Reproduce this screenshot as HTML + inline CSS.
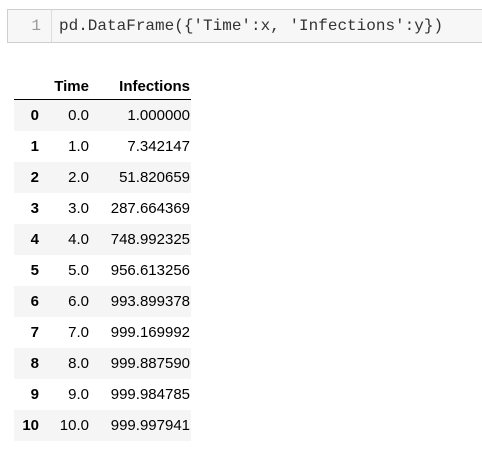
<!DOCTYPE html>
<html><head><style>
body{margin:0;width:482px;height:453px;background:#fff;overflow:hidden;font-family:"Liberation Sans",Arial,sans-serif;}
.code{position:absolute;left:7px;top:9px;width:480px;height:34px;border:1px solid #cfcfcf;background:#f7f7f7;box-sizing:border-box;}
.ln{position:absolute;left:0;top:0;width:44px;height:32px;border-right:1px solid #ddd;color:#999;font:16px "Liberation Mono",monospace;line-height:32px;text-align:right;padding-right:10px;box-sizing:border-box;}
.src{position:absolute;left:51px;top:0;font:16px "Liberation Mono",monospace;line-height:32px;color:#333;}
table{position:absolute;left:14px;top:73px;border-collapse:collapse;font-size:15px;color:#000;}
th,td{text-align:right;padding:0;height:31px;}
thead th{height:26px;border-bottom:1px solid #000;vertical-align:middle;}
tbody tr:nth-child(odd){background:#f5f5f5;}
.i{width:25px;font-weight:bold;}
.t{width:50px;}
.v{width:101px;padding-right:1px;}
</style></head><body>
<div class="code"><div class="ln">1</div><div class="src">pd.DataFrame({'Time':x, 'Infections':y})</div></div>
<table>
<thead><tr><th class="i"></th><th class="t">Time</th><th class="v">Infections</th></tr></thead>
<tbody>
<tr><td class="i">0</td><td class="t">0.0</td><td class="v">1.000000</td></tr>
<tr><td class="i">1</td><td class="t">1.0</td><td class="v">7.342147</td></tr>
<tr><td class="i">2</td><td class="t">2.0</td><td class="v">51.820659</td></tr>
<tr><td class="i">3</td><td class="t">3.0</td><td class="v">287.664369</td></tr>
<tr><td class="i">4</td><td class="t">4.0</td><td class="v">748.992325</td></tr>
<tr><td class="i">5</td><td class="t">5.0</td><td class="v">956.613256</td></tr>
<tr><td class="i">6</td><td class="t">6.0</td><td class="v">993.899378</td></tr>
<tr><td class="i">7</td><td class="t">7.0</td><td class="v">999.169992</td></tr>
<tr><td class="i">8</td><td class="t">8.0</td><td class="v">999.887590</td></tr>
<tr><td class="i">9</td><td class="t">9.0</td><td class="v">999.984785</td></tr>
<tr><td class="i">10</td><td class="t">10.0</td><td class="v">999.997941</td></tr>
</tbody></table>
</body></html>
